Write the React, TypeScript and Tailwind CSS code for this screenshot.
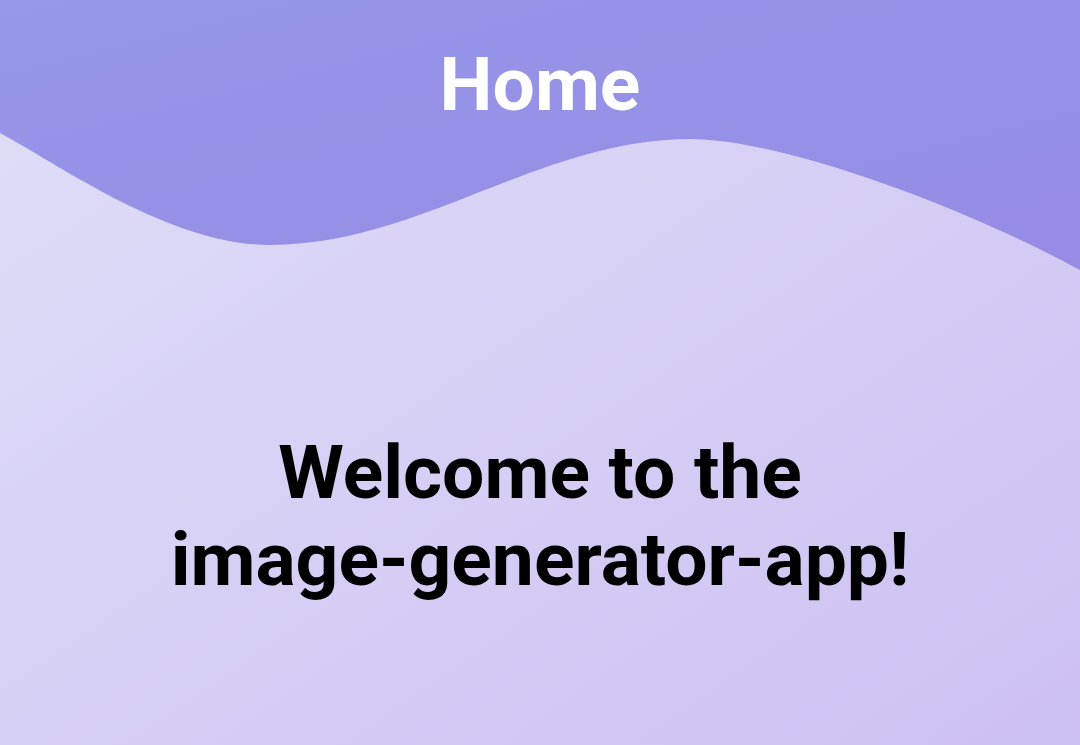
import React from "react";

const Wave = () => (
  <svg
    className="absolute inset-x-0 top-0 h-[280px] w-full"
    viewBox="0 0 1080 280"
    preserveAspectRatio="none"
  >
    <defs>
      <linearGradient id="waveFill" x1="0" y1="0" x2="1" y2="1">
        <stop offset="0%" stopColor="#9597e8" />
        <stop offset="100%" stopColor="#968be5" />
      </linearGradient>
    </defs>
    <path
      d="M0,133 C60,165 170,245 270,245 C420,245 540,139 690,139 C780,139 960,205 1080,270 L1080,0 L0,0 Z"
      fill="url(#waveFill)"
    />
  </svg>
);

export default function App() {
  return (
    <div
      className="relative flex h-screen w-full flex-col items-center overflow-hidden bg-gradient-to-br from-[#e0dff8] to-[#cdc0f2]"
      style={{ fontFamily: "Roboto, 'Liberation Sans', sans-serif" }}
    >
      {/* Top wave */}
      <Wave />

      <header className="relative pt-[47px]">
        <h1 className="text-[75px] font-bold leading-none text-white">Home</h1>
      </header>

      <main className="relative mt-[307px] text-center">
        <h2 className="text-[75px] font-bold leading-[87px] text-black">
          Welcome to the
          <br />
          image-generator-app!
        </h2>
      </main>
    </div>
  );
}
